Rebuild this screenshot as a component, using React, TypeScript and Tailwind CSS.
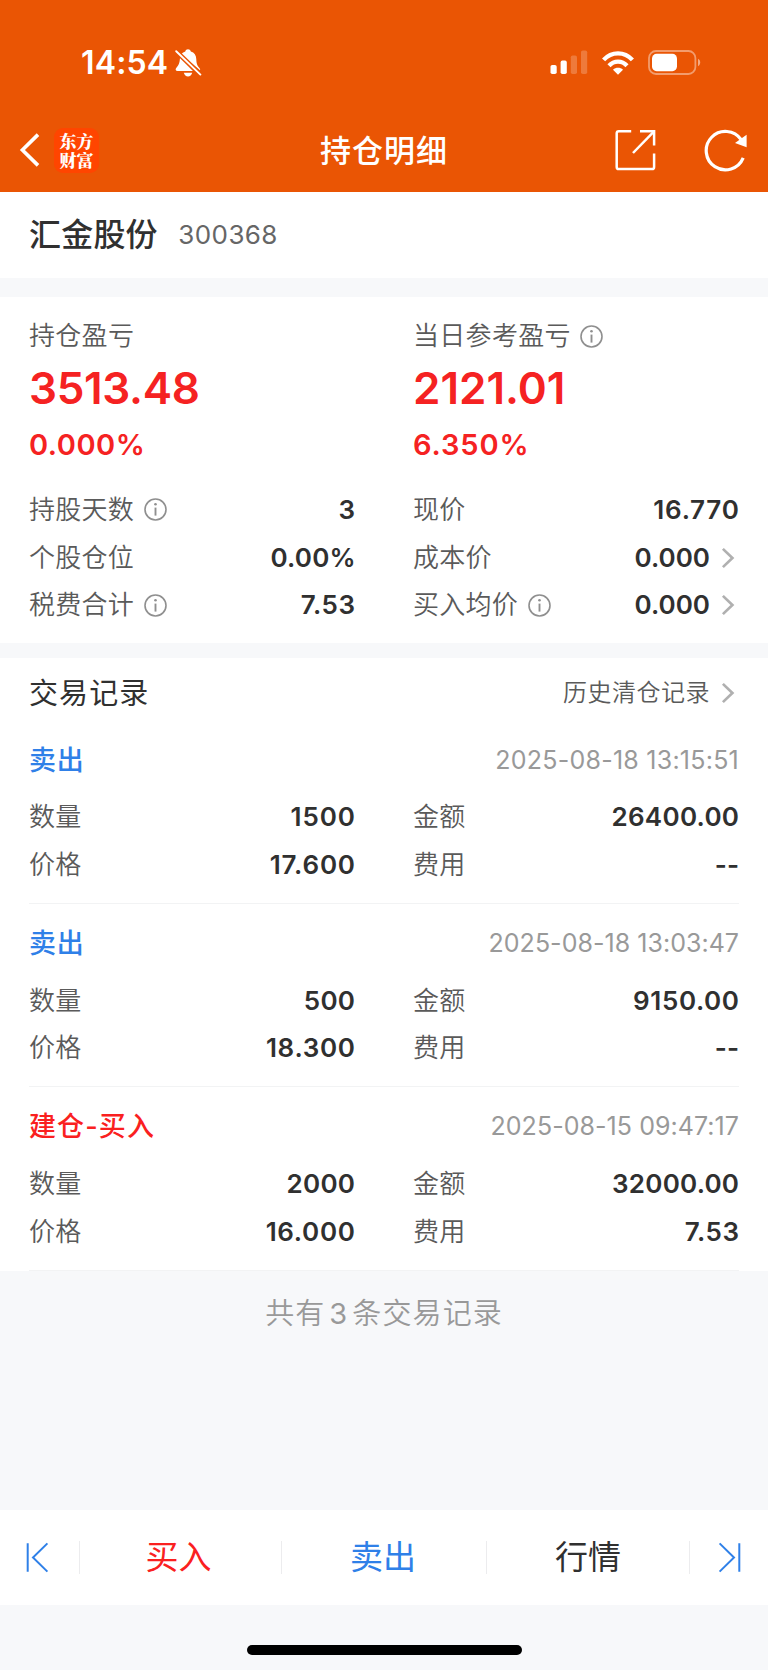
import type { ReactNode } from 'react';

type Amount = { text: string; fit?: string };
type Trade = {
  title: string;
  tone: string;
  time: Amount;
  quantity: Amount;
  price: Amount;
  total: Amount;
  fee: Amount;
};

const trades: Trade[] = [
  {
    title: '卖出',
    tone: 'text-[#2f80e8] tracking-[0.7px]',
    time: { text: '2025-08-18 13:15:51', fit: 'tracking-[0.24px]' },
    quantity: { text: '1500', fit: 'tracking-[0.93px] -mr-[0.93px]' },
    price: { text: '17.600', fit: 'tracking-[0.8px] -mr-[0.8px]' },
    total: { text: '26400.00', fit: 'tracking-[0.27px] -mr-[0.27px]' },
    fee: { text: '--' },
  },
  {
    title: '卖出',
    tone: 'text-[#2f80e8] tracking-[0.7px]',
    time: { text: '2025-08-18 13:03:47', fit: 'tracking-[0.03px]' },
    quantity: { text: '500', fit: 'tracking-[0.3px] -mr-[0.3px]' },
    price: { text: '18.300', fit: 'tracking-[0.7px] -mr-[0.7px]' },
    total: { text: '9150.00', fit: 'tracking-[0.6px] -mr-[0.6px]' },
    fee: { text: '--' },
  },
  {
    title: '建仓-买入',
    tone: 'text-[#fa2020] tracking-[1.1px]',
    time: { text: '2025-08-15 09:47:17', fit: 'tracking-[0.05px]' },
    quantity: { text: '2000', fit: 'tracking-[0.3px] -mr-[0.3px]' },
    price: { text: '16.000', fit: 'tracking-[0.7px] -mr-[0.7px]' },
    total: { text: '32000.00', fit: 'tracking-[0.22px] -mr-[0.22px]' },
    fee: { text: '7.53', fit: 'tracking-[0.52px] -mr-[0.52px]' },
  },
];

function InfoIcon() {
  return (
    <svg width="23" height="23" viewBox="0 0 23 23" className="ml-[9.5px] shrink-0" fill="none" stroke="#8f8f8f">
      <circle cx="11.5" cy="11.5" r="10.5" strokeWidth="1.6" />
      <path d="M11.5 9.6v8" strokeWidth="1.9" />
      <circle cx="11.5" cy="6.3" r="1.3" fill="#8f8f8f" stroke="none" />
    </svg>
  );
}

function ChevronIcon() {
  return (
    <svg width="14" height="22" viewBox="0 0 14 22" className="mr-[4px] ml-[11px] shrink-0" fill="none" stroke="#b0b0b0" strokeWidth="2.7">
      <path d="M1.9 1.9 L11.4 11 L1.9 20.1" />
    </svg>
  );
}

function Row({ label, value, info, link }: { label: string; value: Amount; info?: boolean; link?: boolean }) {
  return (
    <div className="flex h-[47.7px] items-center justify-between">
      <span className="flex items-center">
        <span className="text-[26px] tracking-[0.25px] font-[350] text-[#5a5a5a]">{label}</span>
        {info && <InfoIcon />}
      </span>
      <span className="flex items-center">
        <span className={`text-[26px] font-semibold text-[#303030] ${value.fit ?? ''}`}>{value.text}</span>
        {link && <ChevronIcon />}
      </span>
    </div>
  );
}

function Summary({ label, info, amount, fit, rate, rateFit }: { label: string; info?: boolean; amount: string; fit: string; rate: string; rateFit: string }) {
  return (
    <div>
      <div className="flex h-[34px] items-center text-[26px] font-[350] tracking-[0.3px] text-[#5a5a5a]">
        {label}
        {info && <InfoIcon />}
      </div>
      <div className={`mt-[8px] flex h-[54px] items-center text-[44px] font-semibold text-[#f52222] ${fit}`}>{amount}</div>
      <div className={`mt-[11px] flex h-[36px] items-center text-[29px] font-semibold text-[#f52222] ${rateFit}`}>{rate}</div>
    </div>
  );
}

function StatusBar() {
  return (
    <div className="flex h-[125px] items-center justify-between pr-[67px] pl-[81px]">
      <div className="flex items-center">
        <span className="text-[32px] font-semibold tracking-[0.16px]">14:54</span>
        <svg width="27" height="28" viewBox="0 0 27 28" className="ml-[7px]" fill="#fff">
          <path d="M6.2 5.6 C7.4 3.7 9 2.9 10.3 2.5 C10.6 .9 11.7 .2 13 .2 S15.5 .9 15.8 2.5 C19.4 3.5 21.2 6.4 21.3 10.2 C21.4 15 22.5 16.8 24.2 18.7 C25.2 19.9 25.3 20.6 25 21.2 Z" />
          <path d="M5 8.8 L18 22 H2.6 C.6 22 .1 20.4 1.2 19 C3.6 16.4 4.6 14.5 5 8.8 Z" />
          <path d="M8.8 23.8 H17.2 C16.6 26.2 15 27.5 13 27.5 S9.4 26.2 8.8 23.8 Z" />
          <path d="M1.2 2.2 L25.6 25.8" stroke="#ea5504" strokeWidth="4.6" />
          <path d="M1.2 2.2 L25.4 25.6" stroke="#fff" strokeWidth="1.9" strokeLinecap="round" />
        </svg>
      </div>
      <div className="flex items-center">
        <svg width="38" height="25" viewBox="0 0 38 25" fill="#fff">
          <rect x=".5" y="15" width="6.2" height="9" rx="1.8" />
          <rect x="10.6" y="10.6" width="6.2" height="13.4" rx="1.8" />
          <rect x="20.8" y="5.4" width="6.2" height="18.6" rx="1.8" opacity=".22" />
          <rect x="31" y=".4" width="6.2" height="23.6" rx="1.8" opacity=".22" />
        </svg>
        <svg width="32" height="24" viewBox="0 0 32 24" className="ml-[14px]" fill="none" stroke="#fff" strokeWidth="4.3">
          <path d="M1.6 8.9 C9.6 .2 22.4 .2 30.4 8.9" />
          <path d="M7 14.7 C12 9.3 20 9.3 25 14.7" />
          <path d="M16 23.8 L11 18.7 C13.8 16.2 18.2 16.2 21 18.7 Z" fill="#fff" stroke="none" />
        </svg>
        <svg width="53" height="25" viewBox="0 0 53 25" className="ml-[14px]">
          <rect x="1" y="1" width="46.4" height="23" rx="7" fill="none" stroke="#fff" strokeOpacity=".42" strokeWidth="1.8" />
          <rect x="4" y="3.8" width="25" height="17.4" rx="4.6" fill="#fff" />
          <path d="M50 8.8 C51.6 9.6 52.2 11 52.2 12.5 S51.6 15.4 50 16.2 Z" fill="#fff" fillOpacity=".5" />
        </svg>
      </div>
    </div>
  );
}

function NavBar() {
  return (
    <div className="grid h-[50px] grid-cols-[1fr_auto_1fr] items-center">
      <div className="flex items-center pl-[19px]">
        <svg width="22" height="36" viewBox="0 0 22 36" fill="none" stroke="#fff" strokeWidth="3.6">
          <path d="M19 2.6 L3.4 18 L19 33.4" />
        </svg>
        <div className="ml-[13px] flex h-[45px] w-[45px] justify-center rounded-[9px] bg-[#ff4500] pt-[3px]">
          <span className="w-[34px] font-['Noto_Serif_CJK_SC','Noto_Sans_CJK_SC',serif] text-[17px] leading-[19px] font-black break-all whitespace-normal">
            东方财富
          </span>
        </div>
      </div>
      <h1 className="text-[31px] font-medium tracking-[1px]">持仓明细</h1>
      <div className="flex items-center justify-end pr-[21.5px]">
        <svg width="42" height="42" viewBox="0 0 42 42" fill="none" stroke="#fff" strokeWidth="2.5">
          <path d="M17.2 2.2 H4.8 Q2.7 2.2 2.7 4.3 V38 Q2.7 40.1 4.8 40.1 H38 Q40.1 40.1 40.1 38 V24.6" />
          <path d="M26 2.2 H40.1 V16.6" />
          <path d="M39.8 2.6 L19 24" />
        </svg>
        <svg width="43" height="43" viewBox="0 0 43 43" className="ml-[47.5px]">
          <path d="M39.2 28.9 A19.2 19.2 0 1 1 37.2 10.7" fill="none" stroke="#fff" strokeWidth="3.2" />
          <path d="M42.6 5.7 V18.3 L31 13.9 Z" fill="#fff" />
        </svg>
      </div>
    </div>
  );
}

function TradeItem({ trade }: { trade: Trade }) {
  return (
    <div className="h-[183.4px] border-b border-[#f2f3f4]">
      <div className="flex h-[72.7px] items-center justify-between pt-[6px]">
        <span className={`text-[27px] font-medium ${trade.tone}`}>{trade.title}</span>
        <span className={`text-[25px] text-[#999999] ${trade.time.fit ?? ''}`}>{trade.time.text}</span>
      </div>
      <div className="grid grid-cols-2 gap-x-[58px]">
        <Row label="数量" value={trade.quantity} />
        <Row label="金额" value={trade.total} />
        <Row label="价格" value={trade.price} />
        <Row label="费用" value={trade.fee} />
      </div>
    </div>
  );
}

function BarButton({ tone, children }: { tone: string; children: ReactNode }) {
  return (
    <button className={`flex h-[33px] items-center justify-center border-r border-[#ececee] text-[33px] ${tone}`}>
      {children}
    </button>
  );
}

export default function App() {
  return (
    <div className="flex h-[1670px] w-[768px] flex-col bg-[#f7f8fa] font-['Inter','Noto_Sans_CJK_SC',sans-serif] leading-none whitespace-nowrap">
      <header className="h-[192px] bg-[#ea5504] text-white">
        <StatusBar />
        <NavBar />
      </header>

      <section className="flex h-[86px] items-center bg-white pb-px pl-[29px]">
        <span className="text-[32px] font-medium tracking-[0.2px] text-[#303030]">汇金股份</span>
        <span className="ml-[20.5px] text-[26px] tracking-[0.4px] text-[#666666]">300368</span>
      </section>

      <section className="mt-[19px] h-[346px] bg-white px-[29px] pt-[22px]">
        <div className="grid grid-cols-2 gap-x-[58px]">
          <Summary label="持仓盈亏" amount="3513.48" fit="tracking-[-0.3px]" rate="0.000%" rateFit="tracking-[0.5px]" />
          <Summary label="当日参考盈亏" info amount="2121.01" fit="tracking-[0px]" rate="6.350%" rateFit="tracking-[0.9px]" />
        </div>
        <div className="mt-[24px] grid grid-cols-2 gap-x-[58px]">
          <Row label="持股天数" info value={{ text: '3' }} />
          <Row label="现价" value={{ text: '16.770', fit: 'tracking-[0.75px] -mr-[0.6px]' }} />
          <Row label="个股仓位" value={{ text: '0.00%', fit: 'tracking-[0.18px] -mr-[0.8px]' }} />
          <Row label="成本价" value={{ text: '0.000' }} link />
          <Row label="税费合计" info value={{ text: '7.53', fit: 'tracking-[0.52px] -mr-[0.52px]' }} />
          <Row label="买入均价" info value={{ text: '0.000' }} link />
        </div>
      </section>

      <section className="mt-[15px] h-[612.7px] bg-white px-[29px]">
        <div className="flex h-[62.7px] items-center justify-between pt-[8px]">
          <h2 className="text-[29px] tracking-[1.1px] text-[#303030]">交易记录</h2>
          <span className="flex items-center text-[24px] font-[350] tracking-[0.5px] text-[#5a5a5a]">
            历史清仓记录
            <ChevronIcon />
          </span>
        </div>
        {trades.map((trade) => (
          <TradeItem key={trade.time.text} trade={trade} />
        ))}
      </section>

      <p className="mt-[22px] flex h-[42px] items-center justify-center text-[29px] font-[350] tracking-[1.1px] text-[#999999]">
        共有<span className="mx-[4px] font-normal">3</span>条交易记录
      </p>

      <nav className="mt-auto grid h-[95px] grid-cols-[80px_202px_205px_203px_78px] items-center bg-white">
        <div className="flex h-[33px] items-center border-r border-[#ececee] pl-[26px]">
          <svg width="24" height="31" viewBox="0 0 24 31" fill="none" stroke="#2f80e8" strokeWidth="2">
            <path d="M1.7 1.2 V29.8 M21.4 1.4 L7 15.5 L21.4 29.6" />
          </svg>
        </div>
        <BarButton tone="pr-[4px] text-[#fa2020]">买入</BarButton>
        <BarButton tone="pr-[2px] text-[#2f80e8]">卖出</BarButton>
        <BarButton tone="text-[#303030]">行情</BarButton>
        <div className="flex h-[33px] items-center justify-end pr-[27px]">
          <svg width="24" height="31" viewBox="0 0 24 31" fill="none" stroke="#2f80e8" strokeWidth="2">
            <path d="M22.3 1.2 V29.8 M2.6 1.4 L17 15.5 L2.6 29.6" />
          </svg>
        </div>
      </nav>

      <footer className="flex h-[65px] items-end justify-center pb-[15.5px]">
        <div className="h-[10px] w-[275px] rounded-full bg-black" />
      </footer>
    </div>
  );
}
